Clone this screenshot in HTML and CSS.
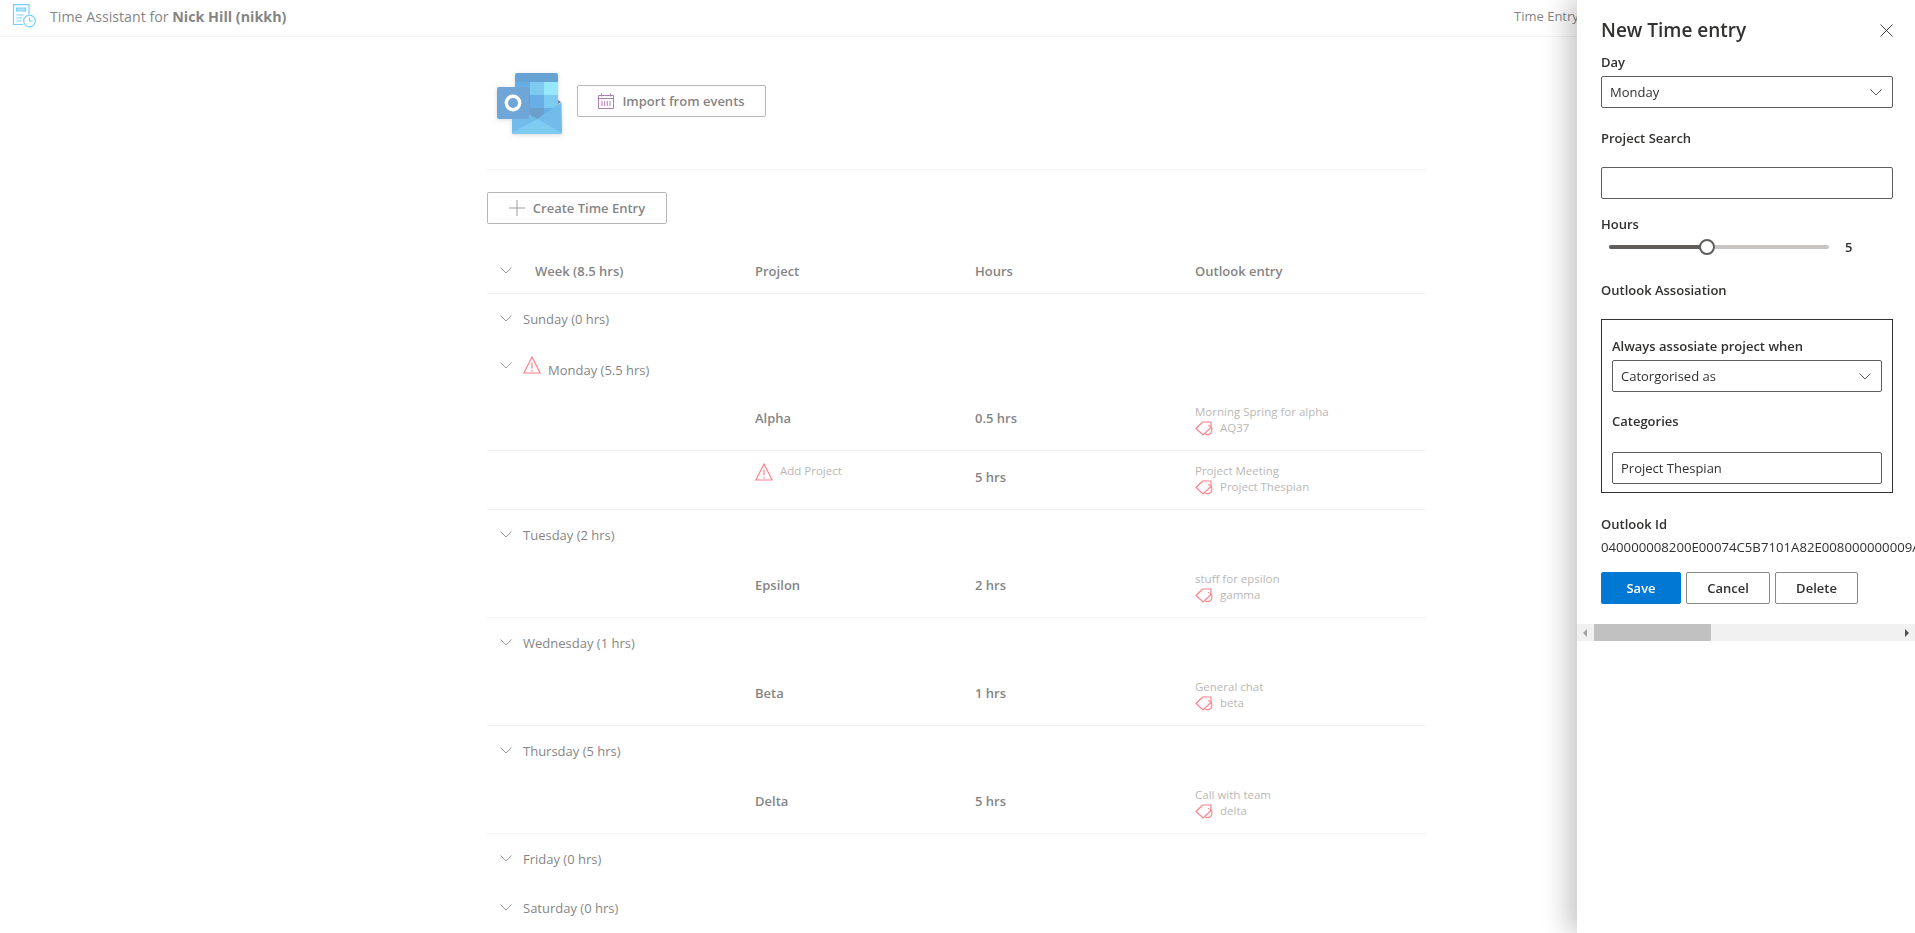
FILE: index.html
```html
<!DOCTYPE html>
<html lang="en">
<head>
    <meta charset="UTF-8">
    <title>Time Assistant</title>
    <link rel="stylesheet" href="styles.css">
</head>
<body>
    <svg class="sprites" width="0" height="0">
        <symbol id="chevron" viewBox="0 0 12 7"><path d="M.5.5 6 6l5.500-5.500" fill="none" stroke="currentColor"/></symbol>
        <symbol id="warn" viewBox="0 0 18 18"><path d="M9 1 .8 17h16.400z M9 6.500v6 M9 14v1.500" fill="none" stroke="#ff2d3c" stroke-width="1.200"/></symbol>
        <symbol id="tag" viewBox="0 0 20 16"><path d="M1 8.500 7.500 2h8.500v5.500L8 15z" fill="none" stroke="#ff2d3c" stroke-width="1.200"/><path d="M13 5.500a4.600 4.600 0 1 1-3 8.500" fill="none" stroke="#ff2d3c" stroke-width="1.200"/></symbol>
    </svg>

    <div class="page">
        <header class="topbar">
            <svg class="app-icon" viewBox="0 0 24 24" fill="none" stroke="#1ab0ff" stroke-width="1.200">
                <path d="M11 20.500H1.500V.7h15.500v9.500"/>
                <path d="M4.500 4h9v3h-9z" fill="#8fd8ff"/>
                <path d="M4.500 11h7M4.500 14h5M4.500 17h5"/>
                <circle cx="17.500" cy="17" r="5.800"/>
                <path d="M17.500 13.500v3.500h3.200"/>
            </svg>
            <span class="app-title">Time Assistant for <b>Nick Hill (nikkh)</b></span>
            <span class="nav-item">Time Entry</span>
        </header>

        <main class="content">
            <div class="import-row">
                <svg class="outlook" viewBox="0 0 66 61">
                    <path d="M18 2a2 2 0 0 1 2-2h39a2 2 0 0 1 2 2v7H18z" fill="#0364b8"/>
                    <rect x="18" y="9" width="15" height="13" fill="#0078d4"/>
                    <rect x="33" y="9" width="14" height="13" fill="#28a8ea"/>
                    <rect x="47" y="9" width="14" height="13" fill="#50d9ff"/>
                    <rect x="18" y="22" width="15" height="13" fill="#0364b8"/>
                    <rect x="33" y="22" width="14" height="13" fill="#0078d4"/>
                    <rect x="47" y="22" width="14" height="13" fill="#28a8ea"/>
                    <rect x="33" y="35" width="14" height="12" fill="#0a5ea8"/>
                    <rect x="47" y="35" width="14" height="12" fill="#0078d4"/>
                    <rect x="18" y="35" width="15" height="12" fill="#0364b8"/>
                    <path d="M61 27l3 2-3 2z" fill="#0a2767"/>
                    <path d="M15 31 40 46 64.500 29.500 65 59a2 2 0 0 1-2 2H17a2 2 0 0 1-2-2z" fill="#1490df"/>
                    <path d="M15 60 40 46 65 60a2 2 0 0 1-2 1H17a2 2 0 0 1-2-1z" fill="#28a8ea"/>
                    <rect x="0" y="14" width="32" height="32" rx="2" fill="#0f6cbd"/>
                    <circle cx="16" cy="30" r="6.700" fill="none" stroke="#fff" stroke-width="3.400"/>
                </svg>
                <button class="btn btn-wide">
                    <svg class="btn-icon" viewBox="0 0 16 16" fill="none" stroke="#7a2a82" stroke-width="1">
                        <path d="M.5 2.500h15v13H.5z M.5 5.500h15 M3.500.5v3 M12.500.5v3 M4 8v5 M6.700 8v5 M9.300 8v5 M12 8v5"/>
                    </svg>
                    Import from events
                </button>
            </div>

            <button class="btn btn-create">
                <svg class="btn-icon" viewBox="0 0 16 16" fill="none" stroke="#605e5c"><path d="M8 0v16M0 8h16"/></svg>
                Create Time Entry
            </button>

            <div class="list">
                <div class="list-head">
                    <svg class="chev"><use href="#chevron"/></svg>
                    <span class="week">Week (8.5 hrs)</span>
                    <span>Project</span>
                    <span>Hours</span>
                    <span>Outlook entry</span>
                </div>

                <div class="group"><svg class="chev"><use href="#chevron"/></svg>Sunday (0 hrs)</div>

                <div class="group group-warn">
                    <svg class="chev"><use href="#chevron"/></svg>
                    <svg class="warn"><use href="#warn"/></svg>
                    <span>Monday (5.5 hrs)</span>
                </div>
                <div class="entry">
                    <span class="project">Alpha</span>
                    <span class="hours">0.5 hrs</span>
                    <div class="outlook-entry">
                        <div>Morning Spring for alpha</div>
                        <div class="tag-line"><svg class="tag"><use href="#tag"/></svg>AQ37</div>
                    </div>
                </div>
                <div class="entry">
                    <div class="add-project"><svg class="warn"><use href="#warn"/></svg>Add Project</div>
                    <span class="hours">5 hrs</span>
                    <div class="outlook-entry">
                        <div>Project Meeting</div>
                        <div class="tag-line"><svg class="tag"><use href="#tag"/></svg>Project Thespian</div>
                    </div>
                </div>

                <div class="group"><svg class="chev"><use href="#chevron"/></svg>Tuesday (2 hrs)</div>
                <div class="entry">
                    <span class="project">Epsilon</span>
                    <span class="hours">2 hrs</span>
                    <div class="outlook-entry">
                        <div>stuff for epsilon</div>
                        <div class="tag-line"><svg class="tag"><use href="#tag"/></svg>gamma</div>
                    </div>
                </div>

                <div class="group"><svg class="chev"><use href="#chevron"/></svg>Wednesday (1 hrs)</div>
                <div class="entry">
                    <span class="project">Beta</span>
                    <span class="hours">1 hrs</span>
                    <div class="outlook-entry">
                        <div>General chat</div>
                        <div class="tag-line"><svg class="tag"><use href="#tag"/></svg>beta</div>
                    </div>
                </div>

                <div class="group"><svg class="chev"><use href="#chevron"/></svg>Thursday (5 hrs)</div>
                <div class="entry">
                    <span class="project">Delta</span>
                    <span class="hours">5 hrs</span>
                    <div class="outlook-entry">
                        <div>Call with team</div>
                        <div class="tag-line"><svg class="tag"><use href="#tag"/></svg>delta</div>
                    </div>
                </div>

                <div class="group"><svg class="chev"><use href="#chevron"/></svg>Friday (0 hrs)</div>
                <div class="group"><svg class="chev"><use href="#chevron"/></svg>Saturday (0 hrs)</div>
            </div>
        </main>
    </div>

    <!-- faded layer over the page while the panel is open -->
    <div class="overlay"></div>

    <aside class="panel">
        <div class="panel-head">
            <h2>New Time entry</h2>
            <svg class="close" viewBox="0 0 13 13" fill="none" stroke="#323130" stroke-width=".9"><path d="M.5.5l12 12M12.500.5l-12 12"/></svg>
        </div>

        <div class="panel-body">
            <label class="field-label label-day">Day</label>
            <div class="field select">Monday<svg class="chev"><use href="#chevron"/></svg></div>

            <label class="field-label label-search">Project Search</label>
            <div class="field"></div>

            <label class="field-label label-hours">Hours</label>
            <div class="slider">
                <div class="track"><div class="track-fill"></div><div class="thumb"></div></div>
                <span class="slider-value">5</span>
            </div>

            <label class="field-label label-assoc">Outlook Assosiation</label>
            <div class="assoc-box">
                <label class="field-label label-always">Always assosiate project when</label>
                <div class="field select">Catorgorised as<svg class="chev"><use href="#chevron"/></svg></div>
                <label class="field-label label-cats">Categories</label>
                <div class="field">Project Thespian</div>
            </div>

            <label class="field-label label-id">Outlook Id</label>
            <div class="outlook-id">040000008200E00074C5B7101A82E008000000009A1B2C3D4E5F</div>

            <div class="actions">
                <button class="action primary">Save</button>
                <button class="action cancel">Cancel</button>
                <button class="action delete">Delete</button>
            </div>
        </div>

        <div class="scrollbar">
            <span class="arrow arrow-left"></span>
            <div class="scroll-thumb"></div>
            <span class="arrow arrow-right"></span>
        </div>
    </aside>
</body>
</html>
```

FILE: styles.css
```css
:root {
    --text: #323130;
    --line: #edebe9;
    --field-border: #605e5c;
}

* {
    box-sizing: border-box;
    margin: 0;
    padding: 0;
}

html, body {
    height: 100%;
    overflow: hidden;
}

body {
    font-family: "Open Sans", "Noto Sans", sans-serif;
    font-size: 13px;
    color: var(--text);
    background: #fff;
}

.sprites {
    position: absolute;
}

.topbar {
    display: flex;
    align-items: center;
    height: 37px;
    padding: 0 0 4px 12px;
    border-bottom: 1px solid var(--line);
}

.app-icon {
    width: 24px;
    height: 24px;
    margin-right: 14px;
}

.app-title {
    font-size: 14.200px;
}

.app-title b {
    font-size: 14.300px;
    font-weight: 700;
}

.nav-item {
    margin-left: auto;
    padding-right: 336px;
    white-space: nowrap;
    width: 401px;
}

.content {
    width: 940px;
    margin-left: 487px;
}

.import-row {
    display: flex;
    align-items: flex-start;
    height: 133px;
    padding: 36px 0 0 10px;
    border-bottom: 1px solid var(--line);
}

.outlook {
    width: 66px;
    height: 61px;
    filter: drop-shadow(0 1px 2px rgba(0,0,0,0.25));
}

.btn {
    display: inline-flex;
    align-items: center;
    justify-content: center;
    height: 32px;
    font: 600 13px "Open Sans", sans-serif;
    color: var(--text);
    background: #fff;
    border: 1px solid #8a8886;
    border-radius: 2px;
}

.btn-icon {
    width: 16px;
    height: 16px;
    margin-right: 8px;
}

.btn-wide {
    width: 189px;
    margin: 12px 0 0 14px;
}

.btn-create {
    width: 180px;
    margin-top: 22px;
}

.list-head {
    display: grid;
    grid-template-columns: 48px 220px 220px 220px 1fr;
    align-items: center;
    height: 70px;
    padding-top: 24px;
    font-weight: 600;
    border-bottom: 1px solid var(--line);
}

.list-head .chev {
    margin-left: 13px;
}

.chev {
    width: 12px;
    height: 7px;
    color: #605e5c;
}

.group {
    display: flex;
    align-items: center;
    height: 49px;
    padding-left: 13px;
}

.group > .chev {
    margin-right: 11px;
}

.group-warn .chev {
    margin-bottom: 4px;
}

.group-warn span {
    padding-top: 4px;
}

.warn {
    width: 18px;
    height: 18px;
    margin-bottom: 5px;
    margin-right: 7px;
}

.entry {
    display: grid;
    grid-template-columns: 220px 220px 1fr;
    align-items: center;
    height: 59px;
    padding-left: 268px;
    padding-bottom: 3px;
    border-bottom: 1px solid var(--line);
}

.project, .hours {
    font-weight: 600;
    margin-bottom: 4px;
}

.add-project {
    display: flex;
    align-items: flex-start;
    font-size: 11.500px;
    color: #8a8886;
    margin-bottom: 14px;
}

.add-project .warn {
    margin-bottom: 0;
}

.outlook-entry {
    font-size: 11.500px;
    line-height: 16px;
    color: #8a8886;
}

.tag-line {
    display: flex;
    align-items: center;
}

.tag {
    width: 20px;
    height: 16px;
    margin-right: 5px;
}

.overlay {
    position: fixed;
    inset: 0;
    background: rgba(255,255,255,0.4);
}

.panel {
    position: fixed;
    top: 0;
    right: 0;
    bottom: 0;
    width: 338px;
    background: #fff;
    box-shadow: -10px 0 24px rgba(0,0,0,0.22);
}

.panel-head {
    display: flex;
    align-items: center;
    justify-content: space-between;
    height: 52px;
    padding: 8px 22px 0 24px;
}

.panel-head h2 {
    font-size: 19px;
    font-weight: 600;
}

.close {
    width: 13px;
    height: 13px;
}

.panel-body {
    height: 572px;
    padding: 0 22px 0 24px;
    overflow: hidden;
}

.field-label {
    display: block;
    font-weight: 600;
    line-height: 20px;
}

.label-day { margin-bottom: 4px; }
.label-search { margin: 20px 0 19px; }
.label-hours { margin-top: 15px; }
.label-assoc { margin-top: 20px; margin-bottom: 19px; }
.label-always { margin: 16px 0 4px; }
.label-cats { margin: 19px 0 21px; }
.label-id { margin-top: 21px; }

.field {
    display: flex;
    align-items: center;
    justify-content: space-between;
    height: 32px;
    padding: 0 8px;
    background: #fff;
    border: 1px solid var(--field-border);
    border-radius: 2px;
}

.select .chev {
    margin-right: 2px;
}

.slider {
    display: flex;
    align-items: center;
    height: 26px;
    padding-left: 8px;
}

.track {
    position: relative;
    width: 220px;
    height: 4px;
    background: #c8c6c4;
    border-radius: 2px;
}

.track-fill {
    width: 98px;
    height: 4px;
    background: #605e5c;
    border-radius: 2px;
}

.thumb {
    position: absolute;
    top: -6px;
    left: 90px;
    width: 16px;
    height: 16px;
    background: #fff;
    border: 2px solid #605e5c;
    border-radius: 50%;
}

.slider-value {
    margin-left: 16px;
    font-weight: 600;
}

.assoc-box {
    width: 292px;
    height: 174px;
    padding: 0 10px;
    border: 1px solid var(--text);
}

.outlook-id {
    white-space: nowrap;
    font-size: 13.200px;
    line-height: 26px;
}

.actions {
    display: flex;
    gap: 5px;
    margin-top: 12px;
}

.action {
    height: 32px;
    font: 600 13px "Open Sans", sans-serif;
    color: var(--text);
    background: #fff;
    border: 1px solid #8a8886;
    border-radius: 2px;
}

.action.primary {
    width: 80px;
    color: #fff;
    background: #0078d4;
    border-color: #0078d4;
}

.action.cancel { width: 84px; }
.action.delete { width: 83px; }

.scrollbar {
    display: flex;
    align-items: center;
    height: 17px;
    background: #f1f1f1;
}

.scroll-thumb {
    width: 117px;
    height: 17px;
    margin-left: 7px;
    background: #c1c1c1;
}

.arrow {
    width: 0;
    height: 0;
    border-top: 4px solid transparent;
    border-bottom: 4px solid transparent;
}

.arrow-left {
    margin-left: 6px;
    border-right: 4px solid #a3a3a3;
}

.arrow-right {
    margin-left: auto;
    margin-right: 6px;
    border-left: 4px solid #505050;
}
```
